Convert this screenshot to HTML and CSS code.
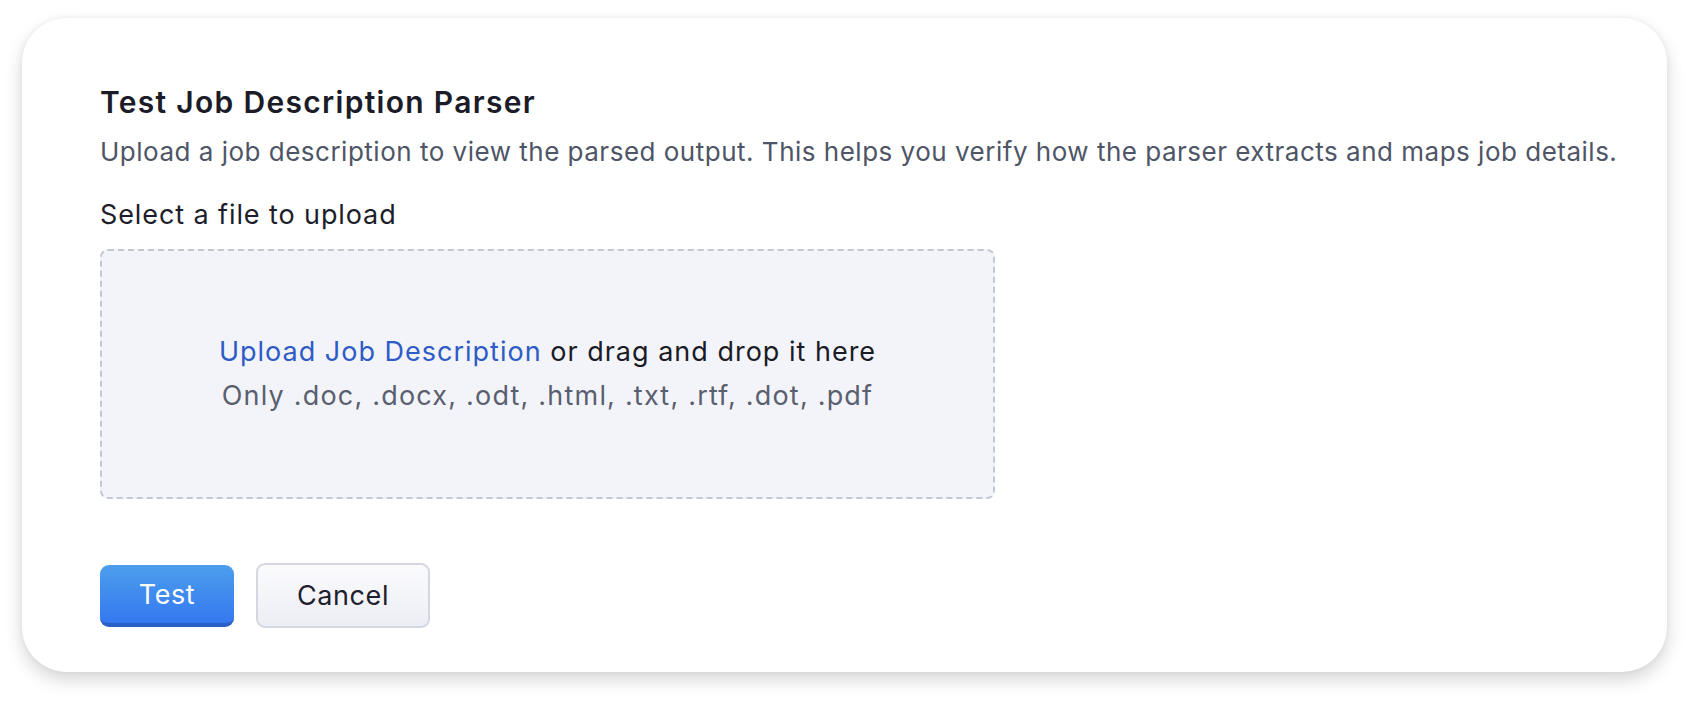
FILE: index.html
```html
<!DOCTYPE html>
<html lang="en">
<head>
<meta charset="utf-8">
<title>Test Job Description Parser</title>
<link rel="stylesheet" href="styles.css">
</head>
<body>
  <div class="card">
    <h1 class="title">Test Job Description Parser</h1>
    <p class="subtitle">Upload a job description to view the parsed output. This helps you verify how the parser extracts and maps job details.</p>
    <div class="label">Select a file to upload</div>
    <div class="dropzone">
      <div class="drop-line"><a class="link">Upload Job Description</a> or drag and drop it here</div>
      <div class="drop-hint">Only .doc, .docx, .odt, .html, .txt, .rtf, .dot, .pdf</div>
    </div>
    <div class="actions">
      <button class="btn btn-primary">Test</button>
      <button class="btn btn-secondary">Cancel</button>
    </div>
  </div>
</body>
</html>
```

FILE: styles.css
```css
html, body {
  margin: 0;
  padding: 0;
  background: #ffffff;
}
body {
  font-family: Inter, "Noto Sans", "Liberation Sans", sans-serif;
  padding: 18px 25px 30px 22px;
}
.card {
  box-sizing: border-box;
  height: 654px;
  background: #ffffff;
  border-radius: 45px;
  box-shadow: 0 8px 18px rgba(0, 0, 0, 0.16), 0 0 6px rgba(0, 0, 0, 0.05);
  padding: 66px 30px 0 78px;
  display: flex;
  flex-direction: column;
  align-items: flex-start;
}
.title {
  margin: 0;
  font-size: 30px;
  line-height: 36px;
  font-weight: 600;
  letter-spacing: 1.3px;
  color: #1b1c28;
}
.subtitle {
  margin: 14px 0 0 0;
  font-size: 26px;
  line-height: 36px;
  font-weight: 400;
  letter-spacing: 0.5px;
  white-space: nowrap;
  color: #4e5566;
}
.label {
  margin-top: 27px;
  font-size: 27px;
  line-height: 36px;
  letter-spacing: 0.9px;
  color: #1d1e2b;
}
.dropzone {
  box-sizing: border-box;
  margin-top: 16px;
  width: 895px;
  height: 250px;
  background: #f3f4f9;
  border: 2px dashed #c4c7d5;
  border-radius: 8px;
  display: flex;
  flex-direction: column;
  align-items: center;
  justify-content: center;
}
.drop-line {
  font-size: 27px;
  line-height: 44px;
  letter-spacing: 1px;
  color: #1a1b26;
}
.link {
  color: #2e5bc6;
  cursor: pointer;
}
.drop-hint {
  font-size: 27px;
  line-height: 44px;
  letter-spacing: 1.2px;
  color: #5a5f70;
}
.actions {
  margin-top: 66px;
  display: flex;
  align-items: flex-start;
  gap: 22px;
}
.btn {
  font-family: inherit;
  font-size: 27px;
  letter-spacing: 0.6px;
  border-radius: 9px;
  cursor: pointer;
}
.btn-primary {
  width: 134px;
  height: 62px;
  color: #ffffff;
  border: none;
  border-bottom: 4px solid #2a60c6;
  background: linear-gradient(#4c9eec, #3478f0);
}
.btn-secondary {
  width: 174px;
  height: 65px;
  margin-top: -2px;
  color: #1e202d;
  border: 2px solid #d4d6e0;
  background: linear-gradient(#fbfbfd, #eceef5);
}
```
